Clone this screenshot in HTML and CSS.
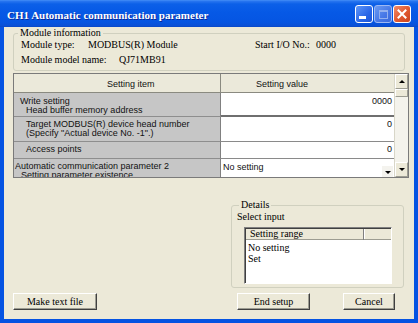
FILE: index.html
```html
<!DOCTYPE html>
<html>
<head>
<meta charset="utf-8">
<link rel="stylesheet" href="styles.css">
</head>
<body>
<div class="window">
  <div class="titlebar">
    <span class="title">CH1 Automatic communication parameter</span>
    <div class="tbtns">
      <span class="tb tb-min"><span class="min-bar"></span></span>
      <span class="tb tb-max"><span class="max-box"></span></span>
      <span class="tb tb-close">
        <svg width="10" height="10" viewBox="0 0 10 10"><path d="M1.5 1.5 L8.5 8.5 M8.5 1.5 L1.5 8.5" stroke="#fff" stroke-width="2" stroke-linecap="square"/></svg>
      </span>
    </div>
  </div>
  <div class="frame">
    <div class="client">
      <fieldset class="group modinfo">
        <legend>Module information</legend>
        <div class="mrow first">
          <span class="mc w67">Module type:</span><span class="mc w167">MODBUS(R) Module</span><span class="mc w61">Start I/O No.:</span><span class="mc">0000</span>
        </div>
        <div class="mrow">
          <span class="mc w98">Module model name:</span><span class="mc">QJ71MB91</span>
        </div>
      </fieldset>

      <div class="grid">
        <div class="gcells">
          <div class="gh gh1">Setting item</div>
          <div class="gh gh2">Setting value</div>

          <div class="ic r1"><div class="cat">Write setting</div><div class="sub">Head buffer memory address</div></div>
          <div class="vc r1 thick">0000</div>

          <div class="ic r2"><div class="sub">Target MODBUS(R) device head number</div><div class="sub">(Specify "Actual device No. -1".)</div></div>
          <div class="vc r2">0</div>

          <div class="ic r3"><div class="sub">Access points</div></div>
          <div class="vc r3">0</div>

          <div class="ic r4"><div class="cat2">Automatic communication parameter 2</div><div class="sub2">Setting parameter existence</div></div>
          <div class="vc r4 combo"><span class="ctext">No setting</span><span class="arrowbtn"><span class="tri-down"></span></span></div>
        </div>
        <div class="vscroll">
          <div class="sbtn"><span class="tri-up"></span></div>
          <div class="thumb"></div>
          <div class="track"></div>
          <div class="sbtn"><span class="tri-down"></span></div>
        </div>
      </div>

      <div class="bottom">
        <div class="leftcol">
          <button class="btn b-make">Make text file</button>
        </div>
        <div class="rightcol">
          <fieldset class="group details">
            <legend>Details</legend>
            <div class="dline">Select input</div>
            <div class="listview">
              <div class="lvhead"><span class="lvh1">Setting range</span><span class="lvh2"></span></div>
              <div class="lvitem">No setting</div>
              <div class="lvitem">Set</div>
            </div>
          </fieldset>
          <div class="btnrow">
            <button class="btn b-end">End setup</button>
            <button class="btn b-cancel">Cancel</button>
          </div>
        </div>
      </div>
    </div>
  </div>
</div>
</body>
</html>
```

FILE: styles.css
```css
* { box-sizing: border-box; }
html, body { margin: 0; padding: 0; }
body { width: 418px; height: 323px; overflow: hidden; background: #0a54e0; }

.window {
  width: 418px;
  height: 323px;
  display: flex;
  flex-direction: column;
  background: #0553e2;
}

/* title bar */
.titlebar {
  height: 27px;
  flex: none;
  display: flex;
  align-items: center;
  padding: 0 7px 0 7px;
  background: linear-gradient(#4a94f8 0, #2a77f0 1px, #0c60e8 4px, #0659e6 12px, #0555e2 22px, #0a4fd4 26px, #0846c4 27px);
}
.title {
  flex: 1;
  color: #fff;
  font: bold 11px/12px "Liberation Serif", serif;
  text-shadow: 1px 1px 0 #0a2a9a;
  margin-top: 2px;
}
.tbtns { display: flex; gap: 1px; margin-top: 1px; }
.tb {
  width: 18px;
  height: 18px;
  border-radius: 3px;
  border: 1px solid #fff;
  display: flex;
  align-items: center;
  justify-content: center;
  position: relative;
}
.tb-min { background: linear-gradient(135deg, #5f97f7, #2a67e8 60%, #1d55d6); }
.min-bar {
  position: absolute;
  left: 3px;
  top: 10px;
  width: 7px;
  height: 3px;
  background: #fff;
}
.tb-max { background: linear-gradient(135deg, #6a9af2, #4677e6 60%, #3a69dc); border-color: #9db8f3; }
.max-box {
  width: 9px;
  height: 9px;
  border: 1px solid #93b0ee;
  border-top-width: 2px;
}
.tb-close { background: linear-gradient(135deg, #f08a6a, #e0582f 55%, #c9431f); }

/* frame */
.frame {
  flex: 1;
  padding: 0 4px 4px 4px;
  background: #0553e2;
  display: flex;
}
.client {
  flex: 1;
  background: #ece9d8;
  padding: 0 5px 0 9px;
  display: flex;
  flex-direction: column;
  font: 10px/12px "Liberation Serif", serif;
  color: #000;
}

/* group boxes */
.group {
  margin: 0;
  border: 1px solid #d0d0bf;
  border-radius: 3px;
  min-width: 0;
}
.group legend {
  padding: 0 2px;
  margin-left: -3px;
  font: 10px/12px "Liberation Serif", serif;
}
.modinfo {
  width: 392px;
  padding: 0 0 3px 7px;
}
.mrow { display: flex; line-height: 15px; height: 15px; white-space: nowrap; }
.mrow.first { margin-top: -2px; }
.mc { flex: none; }
.w67 { width: 67px; }
.w167 { width: 167px; }
.w61 { width: 61px; }
.w98 { width: 98px; }

/* grid */
.grid {
  margin-top: 2px;
  width: 396px;
  height: 105px;
  flex: none;
  border: 1px solid #7a7a7a;
  display: flex;
  background: #fff;
}
.gcells {
  flex: 1;
  display: grid;
  grid-template-columns: 207px 1fr;
  grid-template-rows: 19px 24px 25px 17px 24px;
  overflow: hidden;
  font: 9px/9px "Liberation Sans", Arial, sans-serif;
  color: #111;
}
.gh {
  background: #ebe9da;
  border-bottom: 1px solid #8a8a80;
  padding-top: 6px;
  white-space: nowrap;
}
.gh1 { padding-left: 93px; border-right: 1px solid #8a8a80; }
.gh2 { padding-left: 35px; }
.ic {
  background: #c6c6c6;
  border-right: 1px solid #808080;
  border-bottom: 1px solid #8e8e8e;
  padding-top: 3px;
  white-space: nowrap;
}
.ic.r1 { padding-top: 4px; }
.cat { padding-left: 6px; }
.sub { padding-left: 12px; }
.cat2 { padding-left: 1px; }
.sub2 { padding-left: 7px; }
.vc {
  background: #fff;
  border-bottom: 1px solid #8a8a8a;
  text-align: right;
  padding: 3px 2px 0 0;
}
.vc.r1 { padding-top: 4px; }
.vc.thick { border-bottom: 2px solid #6f6f6f; }
.combo {
  display: flex;
  text-align: left;
  padding: 4px 1px 0 2px;
}
.ctext { flex: 1; }
.arrowbtn {
  width: 11px;
  height: 12px;
  margin-top: 3px;
  display: flex;
  align-items: center;
  justify-content: center;
  background: #f4f3ee;
}
.tri-down {
  width: 0; height: 0;
  border-left: 3px solid transparent;
  border-right: 3px solid transparent;
  border-top: 3px solid #000;
}
.tri-up {
  width: 0; height: 0;
  border-left: 3px solid transparent;
  border-right: 3px solid transparent;
  border-bottom: 3px solid #000;
}
.vscroll {
  width: 14px;
  flex: none;
  display: flex;
  flex-direction: column;
  background: #f4f3ec;
  border-left: 1px solid #d8d6c8;
}
.sbtn {
  height: 15px;
  flex: none;
  background: #ece9d8;
  border: 1px solid;
  border-color: #fff #9d9d92 #9d9d92 #fff;
  display: flex;
  align-items: center;
  justify-content: center;
}
.thumb {
  height: 8px;
  flex: none;
  background: #ece9d8;
  border: 1px solid;
  border-color: #fff #9d9d92 #9d9d92 #fff;
}
.track { flex: 1; }

/* bottom */
.bottom {
  flex: 1;
  display: flex;
  justify-content: space-between;
  padding-right: 5px;
}
.leftcol {
  display: flex;
  align-items: flex-end;
  padding-bottom: 9px;
}
.rightcol {
  width: 173px;
  display: flex;
  flex-direction: column;
  padding-top: 21px;
}
.details {
  padding: 0 0 3px 5px;
}
.details legend { margin-left: 2px; }
.dline { line-height: 12px; }
.listview {
  margin: 4px 11px 0 7px;
  height: 57px;
  background: #fff;
  border: 1px solid;
  border-color: #808080 #fff #fff #808080;
  box-shadow: inset 1px 1px 0 #404040;
}
.lvhead {
  display: flex;
  height: 11px;
  line-height: 10px;
  background: #ece9d8;
  margin-left: 1px;
  margin-top: 1px;
}
.lvh1 {
  width: 118px;
  padding-left: 4px;
  border-right: 1px solid #808080;
  box-shadow: inset 0 -1px 0 #9d9d92, 1px 0 0 #fff;
}
.lvh2 { flex: 1; box-shadow: inset 0 -1px 0 #9d9d92; }
.lvitem { padding-left: 3px; line-height: 11px; }
.lvhead + .lvitem { margin-top: 2px; }

.btnrow { display: flex; margin-top: 5px; }
.btn {
  height: 17px;
  padding: 0;
  background: #ece9d8;
  border: 1px solid;
  border-color: #fff #404040 #404040 #fff;
  box-shadow: inset -1px -1px 0 #9d9d92;
  font: 10px/12px "Liberation Serif", serif;
  color: #000;
}
.b-make { width: 84px; }
.b-end { width: 73px; margin-left: 6px; }
.b-cancel { width: 52px; margin-left: 33px; }
```
